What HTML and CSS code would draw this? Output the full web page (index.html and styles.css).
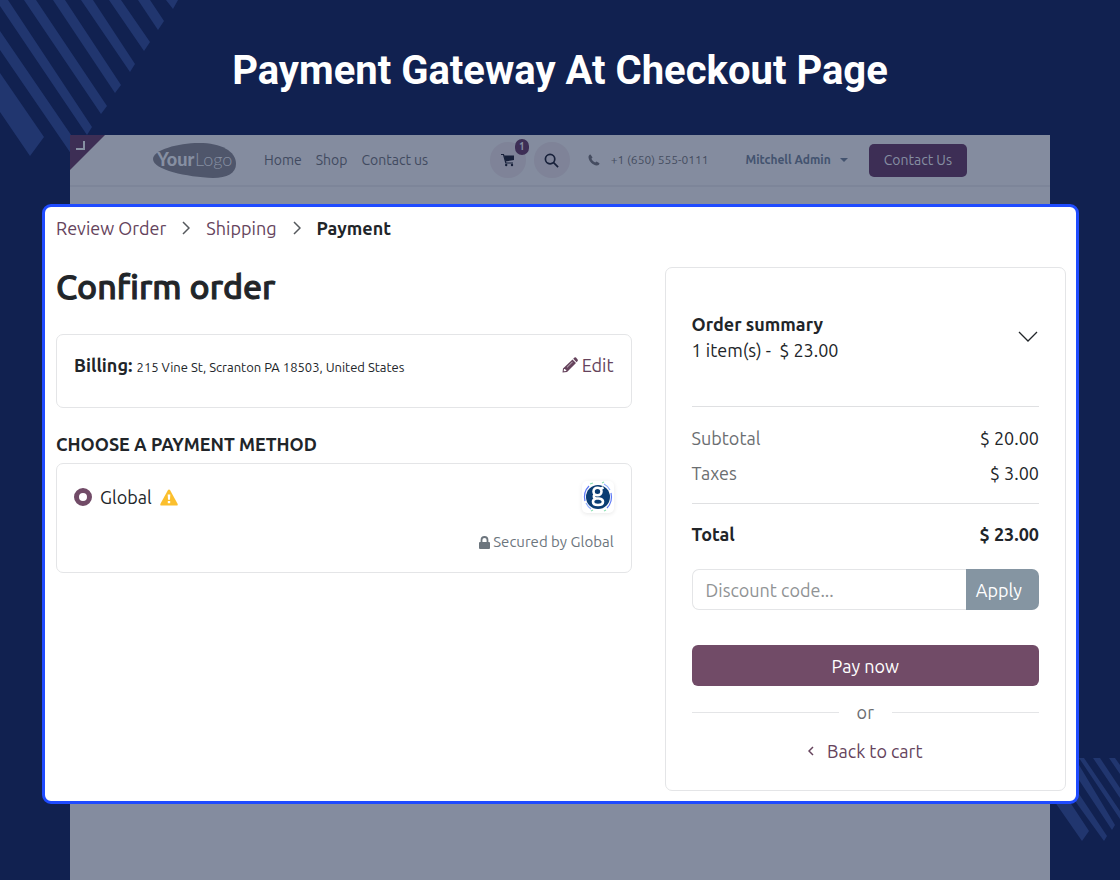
FILE: index.html
```html
<!DOCTYPE html>
<html lang="en">

<head>
    <meta charset="UTF-8">
    <meta name="viewport" content="width=device-width, initial-scale=1.0">
    <title>Payment Gateway At Checkout Page</title>
    <link rel="stylesheet" href="styles.css">
</head>

<body>
    <svg class="stripes stripes-top" width="180" height="160" viewBox="0 0 180 160" aria-hidden="true">
        <path d="M0 73 L44 137 L30 156 L0 112Z M0 31 L80 148 L74 158 L0 50Z M-4 0 H8 L92 127 L87 135Z M24 0 H36 L107 106 L101 114Z M53 0 H65 L121 85 L115 93Z M81 0 H93 L135 64 L130 72Z M109 0 H121 L150 42 L144 51Z M138 0 H150 L164 21 L158 30Z M166 0 H178 L173 9Z" />
    </svg>
    <svg class="stripes stripes-bottom" width="70" height="92" viewBox="0 0 70 92" aria-hidden="true">
        <path d="M0 33 L10 37 L39 81 L32 91 L0 45Z M29 44 L57 86 L54 91 L20 44Z M29 15 L65 75 L62 80 L29 30Z M29 8 H34 L70 61 V69Z M43 8 H50 L70 38 V48Z M59 8 H65 L70 15 V24Z" />
    </svg>

    <h1 class="title">Payment Gateway At Checkout Page</h1>

    <div class="page">
        <header class="navbar">
            <svg class="corner" width="35" height="35" viewBox="0 0 35 35" aria-hidden="true">
                <path d="M0 0H35L0 35Z" fill="#3d2e55" />
                <path d="M14 6V14H6" fill="none" stroke="#868fa2" stroke-width="2" />
            </svg>
            <a class="brand" href="#" aria-label="Your Logo">
                <svg width="84" height="36" viewBox="0 0 84 36">
                    <path d="M0 17C0 8 25 1 46 1C68 1 83 9 83 22C83 31 74 36 60 36C34 35 0 28 0 17Z" fill="#4f566b" />
                    <text x="4" y="24" class="logo-bold">Your</text>
                    <text x="42" y="24" class="logo-light">Logo</text>
                </svg>
            </a>
            <nav class="menu">
                <a href="#">Home</a>
                <a href="#">Shop</a>
                <a href="#">Contact us</a>
            </nav>
            <div class="tools">
                <button class="round" aria-label="Cart">
                    <svg width="14" height="14" viewBox="0 0 14 14">
                        <path d="M0 1.500H2.500L4.800 10H12" fill="none" stroke="#17203a" stroke-width="1.200" />
                        <path d="M3 2.500H13V7L4.500 8.500Z" fill="#17203a" />
                        <circle cx="5.200" cy="12" r="1.200" fill="#17203a" />
                        <circle cx="11" cy="12" r="1.200" fill="#17203a" />
                    </svg>
                    <span class="badge">1</span>
                </button>
                <button class="round" aria-label="Search">
                    <svg width="15" height="15" viewBox="0 0 16 16" fill="none" stroke="#17203a" stroke-width="1.800">
                        <circle cx="6.500" cy="6.500" r="5" />
                        <path d="M10 10L15 15" />
                    </svg>
                </button>
            </div>
            <a class="phone" href="tel:+16505550111">
                <svg width="12" height="12" viewBox="0 0 12 12">
                    <path d="M2.500 0.500L4.500 3.600L3.400 4.800C4.300 6.600 5.500 7.700 7.200 8.500L8.500 7.400L11.500 9.300C11.300 11 10.200 11.500 8.800 11.500C4.500 11 0.900 7.300 0.500 3.200C0.500 1.800 1.200 0.700 2.500 0.500Z" fill="#454c60" />
                </svg>
                +1 (650) 555-0111
            </a>
            <button class="user">Mitchell Admin <span class="caret"></span></button>
            <button class="contact">Contact Us</button>
        </header>

        <main class="panel">
            <nav class="breadcrumb" aria-label="Checkout steps">
                <a href="#">Review Order</a>
                <svg width="8" height="14" viewBox="0 0 8 14"><path d="M1 1L7 7L1 13" /></svg>
                <a href="#">Shipping</a>
                <svg width="8" height="14" viewBox="0 0 8 14"><path d="M1 1L7 7L1 13" /></svg>
                <strong>Payment</strong>
            </nav>

            <div class="columns">
                <section class="order">
                    <h2>Confirm order</h2>

                    <div class="card billing">
                        <p><strong>Billing:</strong> <span>215 Vine St, Scranton PA 18503, United States</span></p>
                        <a class="edit" href="#">
                            <svg width="16" height="16" viewBox="0 0 16 16" fill="#65435c">
                                <path fill-rule="evenodd" d="M10.500 2.500L14 6L5 15L0.500 15.500L1 11.500ZM2 12L1.700 14.300L4 14L4.500 13L3.500 12.800L3 12ZM4.800 10.200L10.300 4.700L10.700 5.100L5.200 10.600Z" />
                                <path d="M11.200 1.800L12.500 0.600Q13.200 0 14 0.600L15.600 2.400Q16.200 3.200 15.600 4L14.600 5.200Z" />
                            </svg>
                            Edit
                        </a>
                    </div>

                    <h3>CHOOSE A PAYMENT METHOD</h3>

                    <div class="card method">
                        <div class="method-row">
                            <input type="radio" id="global" name="method" checked>
                            <label for="global">Global</label>
                            <svg width="18" height="17" viewBox="0 0 18 17">
                                <path d="M9 0.500Q9.700 0.500 10 1L17.700 15Q18 16.500 17 16.500H1Q0 16.500 0.300 15L8 1Q8.300 0.500 9 0.500Z" fill="#fbbf2d" />
                                <path d="M7.700 5.500H10.300L10 10.700H8ZM7.800 12H10.200V14.300H7.800Z" fill="#fff" />
                            </svg>
                            <span class="provider">
                                <svg width="32" height="32" viewBox="0 0 32 32">
                                    <circle cx="16" cy="16" r="12" fill="#0b3d73" />
                                    <g fill="none" stroke-width="1.200">
                                        <path d="M7 5Q1 11 3 20M25 27Q31 21 29 12" stroke="#5d78f5" />
                                        <path d="M4 22Q6 26 9 28M22 3Q26 5 28 9" stroke="#8fb0ff" />
                                        <path d="M8 3L11 2M20 2L22 1M9 30L11 29M22 30L24 29" stroke="#8fe0b5" />
                                    </g>
                                    <g fill="none" stroke="#fff" stroke-width="2.600">
                                        <ellipse cx="15.500" cy="10.500" rx="4" ry="3.800" />
                                        <path d="M18 8L21.500 6.500M12.500 13.500Q10.500 16.500 14 17.500H17Q21 18 21 20.800Q21 24 16 24Q11 24 11 20.800Q11 18.500 14 17.500" />
                                    </g>
                                </svg>
                            </span>
                        </div>
                        <p class="secured">
                            <svg width="11" height="13" viewBox="0 0 11 13">
                                <rect y="6" width="11" height="7" rx="1" fill="#6c757d" />
                                <path d="M2.500 7V4A3 3 0 0 1 8.500 4V7" fill="none" stroke="#6c757d" stroke-width="1.800" />
                            </svg>
                            Secured by Global
                        </p>
                    </div>
                </section>

                <aside class="card summary">
                    <div class="summary-head">
                        <div>
                            <strong>Order summary</strong>
                            <p>1 item(s) -&nbsp; $ 23.00</p>
                        </div>
                        <button class="toggle" aria-label="Show items">
                            <svg width="20" height="12" viewBox="0 0 20 12"><path d="M1 1L10 10L19 1" fill="none" stroke="#212529" stroke-width="1.300" /></svg>
                        </button>
                    </div>

                    <table class="totals">
                        <tbody>
                            <tr>
                                <th scope="row">Subtotal</th>
                                <td>$ 20.00</td>
                            </tr>
                            <tr>
                                <th scope="row">Taxes</th>
                                <td>$ 3.00</td>
                            </tr>
                        </tbody>
                        <tfoot>
                            <tr>
                                <th scope="row">Total</th>
                                <td>$ 23.00</td>
                            </tr>
                        </tfoot>
                    </table>

                    <form class="discount">
                        <input type="text" placeholder="Discount code..." aria-label="Discount code">
                        <button type="button">Apply</button>
                    </form>

                    <button class="pay">Pay now</button>
                    <div class="or">or</div>
                    <a class="back" href="#">
                        <svg width="6" height="10" viewBox="0 0 6 10"><path d="M5 1L1 5L5 9" /></svg>
                        Back to cart
                    </a>
                </aside>
            </div>
        </main>
    </div>
</body>

</html>
```
FILE: styles.css
```css
* {
    box-sizing: border-box;
}

body {
    position: relative;
    display: flex;
    flex-direction: column;
    min-height: 100vh;
    margin: 0;
    overflow-x: hidden;
    background-color: #112150;
    color: #212529;
    font-family: Ubuntu, 'Noto Sans', sans-serif;
    font-size: 18px;
    line-height: 26px;
}

h1, h2, h3, p {
    margin: 0;
}

a {
    color: #65435c;
    text-decoration: none;
}

button, input {
    font: inherit;
}

button {
    padding: 0;
    border: none;
    background: none;
    cursor: pointer;
}

svg {
    display: block;
    flex: none;
}

/* background stripes */
.stripes {
    position: absolute;
    fill: #21366f;
}

.stripes-top {
    top: 0;
    left: 0;
}

.stripes-bottom {
    right: 0;
    top: 750px;
}

.title {
    position: relative;
    padding: 45px 20px 38px;
    color: #ffffff;
    font-family: Roboto, sans-serif;
    font-size: 40px;
    font-weight: 700;
    line-height: 52px;
    text-align: center;
}

/* dimmed shop page */
.page {
    position: relative;
    flex: 1;
    margin: 0 70px;
    background-color: #848c9f;
}

.navbar {
    position: relative;
    display: flex;
    align-items: center;
    height: 52px;
    padding: 0 83px;
    border-bottom: 2px solid #7d8599;
    font-size: 14px;
    white-space: nowrap;
}

.corner {
    position: absolute;
    top: 0;
    left: 0;
}

.logo-bold, .logo-light {
    font-family: Lato, sans-serif;
    font-size: 18px;
    fill: #868fa2;
}

.logo-bold {
    font-weight: 900;
}

.logo-light {
    font-weight: 300;
}

.menu {
    display: flex;
    gap: 14px;
    margin-left: 27px;
}

.menu a {
    color: #414a60;
}

.tools {
    display: flex;
    gap: 8px;
    margin-left: auto;
}

.round {
    position: relative;
    display: flex;
    align-items: center;
    justify-content: center;
    width: 36px;
    height: 36px;
    border-radius: 50%;
    background-color: #7f8398;
}

.badge {
    position: absolute;
    top: -3px;
    right: -3px;
    width: 14px;
    border-radius: 8px;
    background-color: #3d2e55;
    color: #868fa2;
    font-size: 10px;
    font-weight: 700;
    line-height: 16px;
}

.phone {
    display: flex;
    align-items: center;
    gap: 11px;
    margin-left: 18px;
    color: #454c60;
    font-size: 12px;
}

.user {
    display: flex;
    align-items: center;
    gap: 9px;
    margin-left: 37px;
    color: #43536f;
    font-size: 12px;
    font-weight: 700;
}

.caret {
    border: 4px solid transparent;
    border-top-color: #43536f;
    border-bottom: none;
}

.contact {
    height: 33px;
    margin-left: 21px;
    padding: 0 15px;
    border-radius: 5px;
    background-color: #3d2e55;
    color: #868fa2;
}

/* checkout panel */
.panel {
    margin: 17px -29px 0 -28px;
    padding: 8px 10px 10px 11px;
    border: 3px solid #1f4bff;
    border-radius: 9px;
    background-color: #ffffff;
}

.breadcrumb {
    display: flex;
    align-items: center;
    gap: 16px;
    margin-bottom: 26px;
}

.breadcrumb svg, .back svg {
    fill: none;
    stroke: #55595d;
    stroke-width: 1.5;
}

.columns {
    display: grid;
    grid-template-columns: 575fr 401fr;
    gap: 33px;
}

.card {
    border: 1px solid #e4e5e7;
    border-radius: 7px;
}

h2 {
    margin-bottom: 29px;
    font-size: 34px;
    font-weight: 500;
    line-height: 38px;
    -webkit-text-stroke: 1px;
}

.billing {
    display: flex;
    align-items: flex-start;
    justify-content: space-between;
    padding: 17px 17px 27px;
}

.billing span {
    font-size: 13px;
}

.edit {
    display: flex;
    align-items: center;
    gap: 4px;
}

h3 {
    margin: 23px 0 6px;
    font-size: 18px;
    font-weight: 700;
}

.method {
    padding: 17px;
}

.method-row {
    display: flex;
    align-items: center;
    gap: 8px;
}

.method-row input {
    appearance: none;
    width: 18px;
    height: 18px;
    margin: 0;
    border: 5px solid #714b67;
    border-radius: 50%;
}

.provider {
    margin-left: auto;
    border-radius: 5px;
    box-shadow: 0 1px 4px #00000018;
}

.secured {
    display: flex;
    align-items: center;
    justify-content: flex-end;
    gap: 3px;
    margin-top: 16px;
    color: #6c757d;
    font-size: 15px;
}

.summary {
    padding: 43px 26px 26px;
}

.summary-head {
    display: flex;
    align-items: center;
    justify-content: space-between;
    padding-bottom: 43px;
    border-bottom: 1px solid #dfe0e2;
}

.toggle {
    padding: 1px;
}

.totals {
    width: 100%;
    margin: 13px 0 17px;
    border-collapse: collapse;
}

.totals th, .totals td {
    height: 35px;
    padding: 0;
    font-weight: 400;
    text-align: left;
}

.totals tbody th {
    color: #6b6e71;
}

.totals td {
    text-align: right;
}

.totals tbody tr:last-child > * {
    height: 48px;
    padding-bottom: 12px;
}

.totals tfoot > tr > * {
    height: 49px;
    padding-top: 13px;
    border-top: 1px solid #dfe0e2;
    font-weight: 700;
}

.discount {
    display: flex;
    height: 41px;
}

.discount input {
    flex: 1;
    min-width: 0;
    padding: 0 13px;
    border: 1px solid #e4e5e7;
    border-right: none;
    border-radius: 7px 0 0 7px;
}

.discount input::placeholder {
    color: #909395;
}

.discount button {
    padding: 0 17px 0 10px;
    border-radius: 0 7px 7px 0;
    background-color: #8595a2;
    color: #ffffff;
}

.pay {
    width: 100%;
    height: 41px;
    margin: 35px 0 13px;
    border-radius: 6px;
    background-color: #714b67;
    color: #ffffff;
}

.or {
    display: flex;
    align-items: center;
    gap: 18px;
    color: #6b6e71;
}

.or::before, .or::after {
    content: '';
    flex: 1;
    border-top: 1px solid #e4e5e7;
}

.back {
    display: flex;
    align-items: center;
    justify-content: center;
    gap: 13px;
    margin-top: 13px;
}

.back svg {
    stroke: #65435c;
}
```
